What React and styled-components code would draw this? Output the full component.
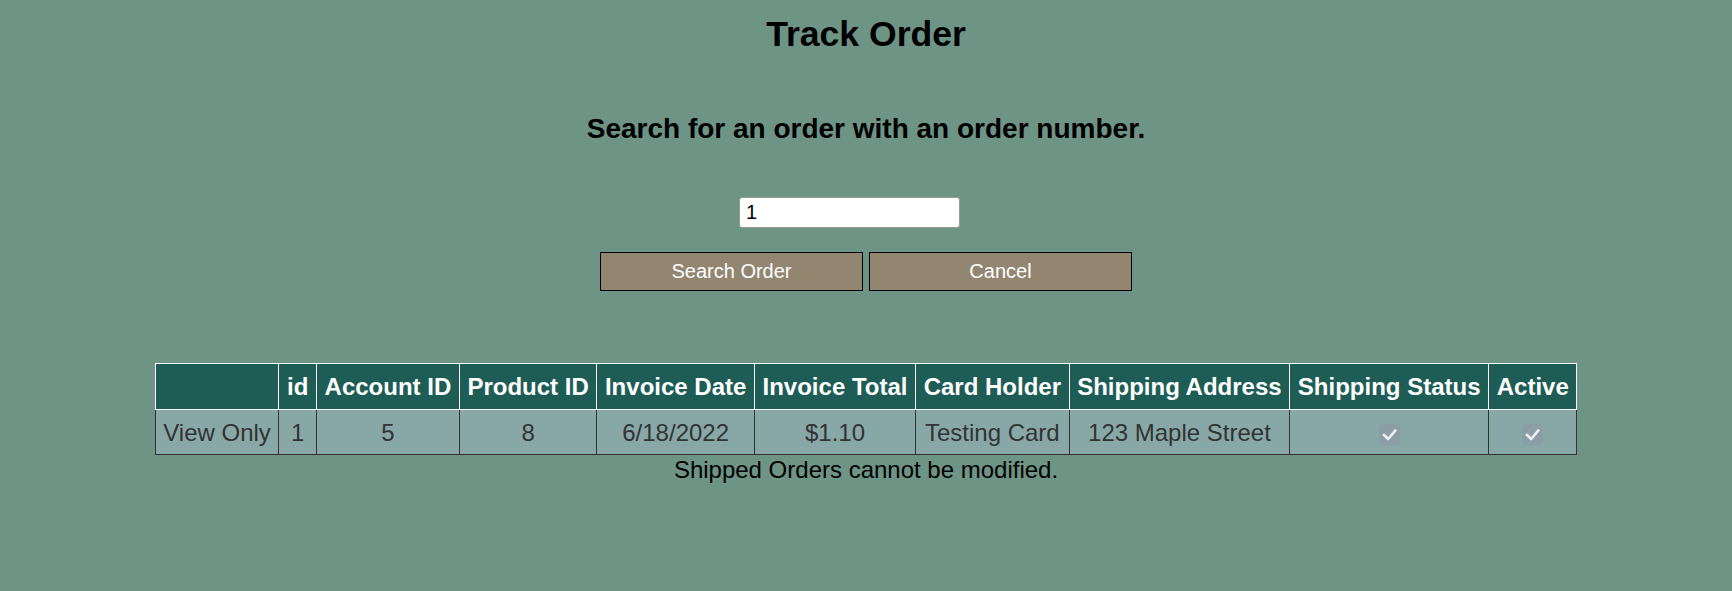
import styled, { createGlobalStyle } from "styled-components";

const GlobalStyle = createGlobalStyle`
	body {
		margin: 0;
		background-color: #6e9486;
		font-family: "Liberation Sans", Arial, sans-serif;
		color: #000;
	}
`;

const columns = [
	"",
	"id",
	"Account ID",
	"Product ID",
	"Invoice Date",
	"Invoice Total",
	"Card Holder",
	"Shipping Address",
	"Shipping Status",
	"Active",
];

const order = {
	mode: "View Only",
	id: 1,
	accountId: 5,
	productId: 8,
	invoiceDate: "6/18/2022",
	invoiceTotal: "$1.10",
	cardHolder: "Testing Card",
	shippingAddress: "123 Maple Street",
	shipped: true,
	active: true,
};

const CheckMark = () => (
	<Check>
		<svg width="21" height="21" viewBox="0 0 21 21" fill="none">
			<path
				d="M4.8 10.8 L9.2 15 L16.4 6.4"
				stroke="#eef1f2"
				strokeWidth="2.6"
				strokeLinecap="round"
				strokeLinejoin="round"
			/>
		</svg>
	</Check>
);

const App = () => {
	return (
		<>
			<GlobalStyle />
			<Page>
				<Title>Track Order</Title>
				<Subtitle>Search for an order with an order number.</Subtitle>
				<SearchInput type="text" defaultValue="1" />
				<ButtonRow>
					<Button type="button">Search Order</Button>
					<Button type="button">Cancel</Button>
				</ButtonRow>
				<Table>
					<thead>
						<tr>
							{columns.map((c, i) => (
								<Th key={i}>{c}</Th>
							))}
						</tr>
					</thead>
					<tbody>
						<tr>
							<Td>{order.mode}</Td>
							<Td>{order.id}</Td>
							<Td>{order.accountId}</Td>
							<Td>{order.productId}</Td>
							<Td>{order.invoiceDate}</Td>
							<Td>{order.invoiceTotal}</Td>
							<Td>{order.cardHolder}</Td>
							<Td>{order.shippingAddress}</Td>
							<Td>{order.shipped && <CheckMark />}</Td>
							<Td>{order.active && <CheckMark />}</Td>
						</tr>
					</tbody>
				</Table>
				<Note>Shipped Orders cannot be modified.</Note>
			</Page>
		</>
	);
};

const Page = styled.div`
	display: flex;
	flex-direction: column;
	align-items: center;
	padding-top: 14px;
`;

const Title = styled.h1`
	margin: 0;
	font-size: 35.6px;
	font-weight: 700;
	line-height: 40px;
`;

const Subtitle = styled.h2`
	margin: 59px 0 0;
	font-size: 28px;
	font-weight: 700;
	line-height: 32px;
`;

const SearchInput = styled.input`
	box-sizing: border-box;
	width: 221px;
	height: 31px;
	margin: 52px 33px 0 0;
	padding: 0 6px;
	border: 1px solid #9a9a9a;
	border-radius: 3px;
	background: #fff;
	font-family: "Liberation Sans", Arial, sans-serif;
	font-size: 20px;
	color: #000;
	outline: none;
`;

const ButtonRow = styled.div`
	display: flex;
	gap: 6px;
	margin-top: 24px;
`;

const Button = styled.button`
	box-sizing: border-box;
	width: 263px;
	height: 39px;
	padding: 0;
	border: 1px solid #000;
	background-color: #938670;
	color: #fff;
	font-family: "Liberation Sans", Arial, sans-serif;
	font-size: 20px;
	cursor: pointer;
`;

const Table = styled.table`
	margin-top: 72px;
	border-collapse: collapse;
	font-size: 24px;
	line-height: 27px;
`;

const Th = styled.th`
	height: 46px;
	box-sizing: border-box;
	padding: 0 7.6px;
	border: 1px solid #fff;
	background-color: #1e5d56;
	color: #fff;
	font-weight: 700;
	white-space: nowrap;
	text-align: center;
	vertical-align: middle;
`;

const Td = styled.td`
	height: 45px;
	box-sizing: border-box;
	padding: 0 7.6px;
	border: 1px solid #333;
	background-color: #88a8a8;
	color: #333;
	white-space: nowrap;
	text-align: center;
	vertical-align: middle;
`;

const Check = styled.span`
	display: inline-flex;
	align-items: center;
	justify-content: center;
	width: 21px;
	height: 21px;
	border-radius: 4px;
	background-color: #8b9ea6;
	vertical-align: middle;
`;

const Note = styled.div`
	margin-top: 1px;
	font-size: 24px;
	color: #000;
`;

export default App;
